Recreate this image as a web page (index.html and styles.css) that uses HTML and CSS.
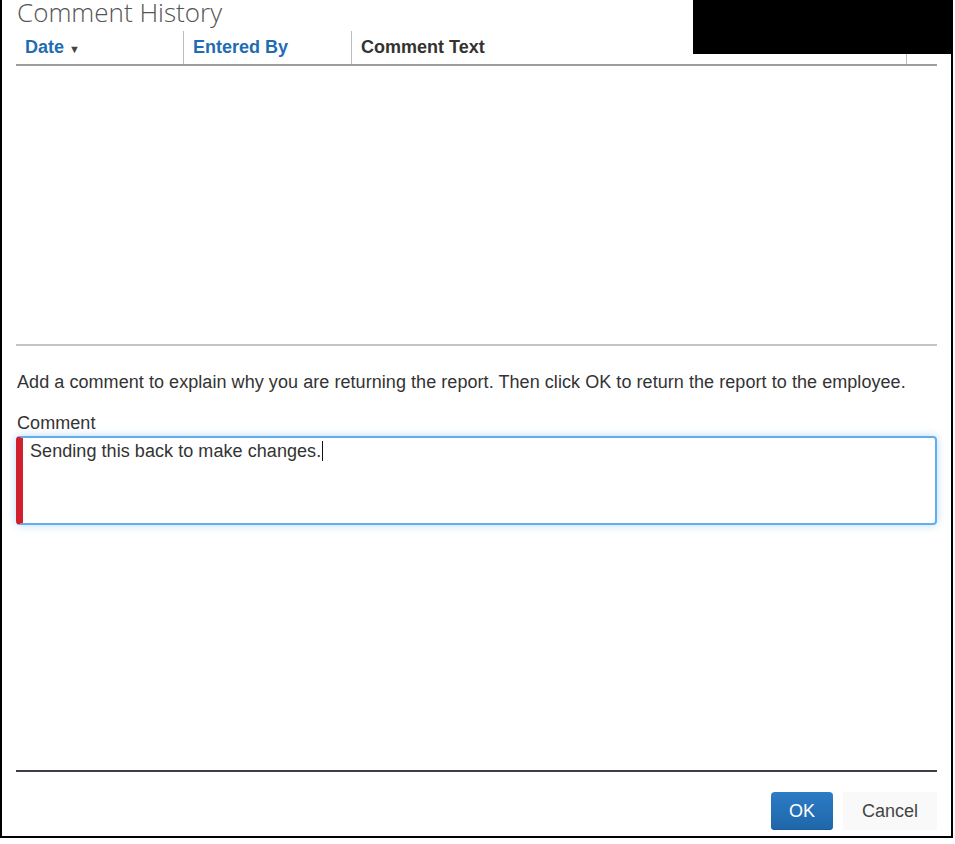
FILE: index.html
```html
<!DOCTYPE html>
<html lang="en">
<head>
<meta charset="utf-8">
<title>Comment History</title>
<link rel="stylesheet" href="styles.css">
</head>
<body>
<div class="frame">
  <h1 class="title">Comment History</h1>
  <div class="grid-head">
    <div class="col col-date"><span class="link">Date</span><span class="sort">&#9660;</span></div>
    <div class="col col-by"><span class="link">Entered By</span></div>
    <div class="col col-text">Comment Text</div>
    <div class="col col-end"></div>
  </div>
  <div class="grid-body"></div>
  <p class="instruction">Add a comment to explain why you are returning the report. Then click OK to return the report to the employee.</p>
  <label class="field-label">Comment</label>
  <div class="comment-box">Sending this back to make changes.<span class="caret"></span></div>
  <div class="spacer"></div>
  <div class="footer">
    <button class="btn btn-ok">OK</button>
    <button class="btn btn-cancel">Cancel</button>
  </div>
  <div class="redact"></div>
</div>
</body>
</html>
```
FILE: styles.css
```css
html, body {
  margin: 0;
  padding: 0;
  background: #ffffff;
}
body {
  font-family: "Liberation Sans", Arial, sans-serif;
  color: #333333;
}
.frame {
  position: relative;
  box-sizing: border-box;
  width: 953px;
  height: 838px;
  border-left: 2px solid #000;
  border-right: 2px solid #000;
  border-bottom: 2px solid #000;
  padding: 0 14px 0 14px;
  display: flex;
  flex-direction: column;
  overflow: hidden;
}
.title {
  margin: 0 0 0 1px;
  font-family: "Open Sans", sans-serif;
  font-weight: 300;
  font-size: 26px;
  line-height: 25px;
  color: #555555;
}
.grid-head {
  margin-top: 6px;
  display: flex;
  height: 33px;
  border-bottom: 2px solid #9e9e9e;
}
.col {
  box-sizing: border-box;
  display: flex;
  align-items: center;
  padding-left: 9px;
  font-size: 18px;
  font-weight: bold;
  border-right: 1px solid #bdbdbd;
}
.col-date { width: 168px; }
.col-by { width: 168px; }
.col-text { flex: 1; color: #333333; }
.col-end { width: 30px; border-right: none; }
.link { color: #1f6cb3; }
.sort {
  color: #444;
  font-size: 11px;
  margin-left: 5px;
  margin-top: 2px;
}
.grid-body {
  height: 278px;
  border-bottom: 2px solid #c4c4c4;
}
.instruction {
  margin: 25px 0 0 1px;
  font-size: 18px;
  line-height: 22px;
  letter-spacing: 0.06px;
  color: #333333;
}
.field-label {
  display: block;
  margin: 19px 0 0 1px;
  font-size: 18px;
  line-height: 22px;
  letter-spacing: 0.06px;
  color: #333333;
}
.comment-box {
  margin-top: 2px;
  box-sizing: border-box;
  height: 89px;
  border: 2px solid #62aeea;
  border-left: 7px solid #d0202e;
  border-radius: 4px;
  box-shadow: 0 0 8px rgba(98, 174, 234, 0.45);
  padding: 2px 0 0 7px;
  font-size: 18px;
  line-height: 22px;
  letter-spacing: 0.06px;
  color: #333333;
}
.caret {
  display: inline-block;
  width: 1px;
  height: 20px;
  background: #111;
  vertical-align: -4px;
  margin-left: 1px;
}
.spacer { flex: 1; }
.footer {
  border-top: 2px solid #3b3f46;
  padding: 20px 0 6px 0;
  display: flex;
  justify-content: flex-end;
  gap: 10px;
}
.btn {
  height: 38px;
  border: none;
  border-radius: 4px;
  font-family: "Liberation Sans", Arial, sans-serif;
  font-size: 18px;
  cursor: pointer;
}
.btn-ok {
  width: 62px;
  color: #ffffff;
  background: linear-gradient(#2c7cc5, #1f66a9);
  box-shadow: inset 0 -1px 0 #1a5a96;
}
.btn-cancel {
  width: 94px;
  color: #444444;
  background: #f9f9f9;
  border-radius: 0;
}
.redact {
  position: absolute;
  top: 0;
  left: 691px;
  width: 258px;
  height: 54px;
  background: #000;
}
```
